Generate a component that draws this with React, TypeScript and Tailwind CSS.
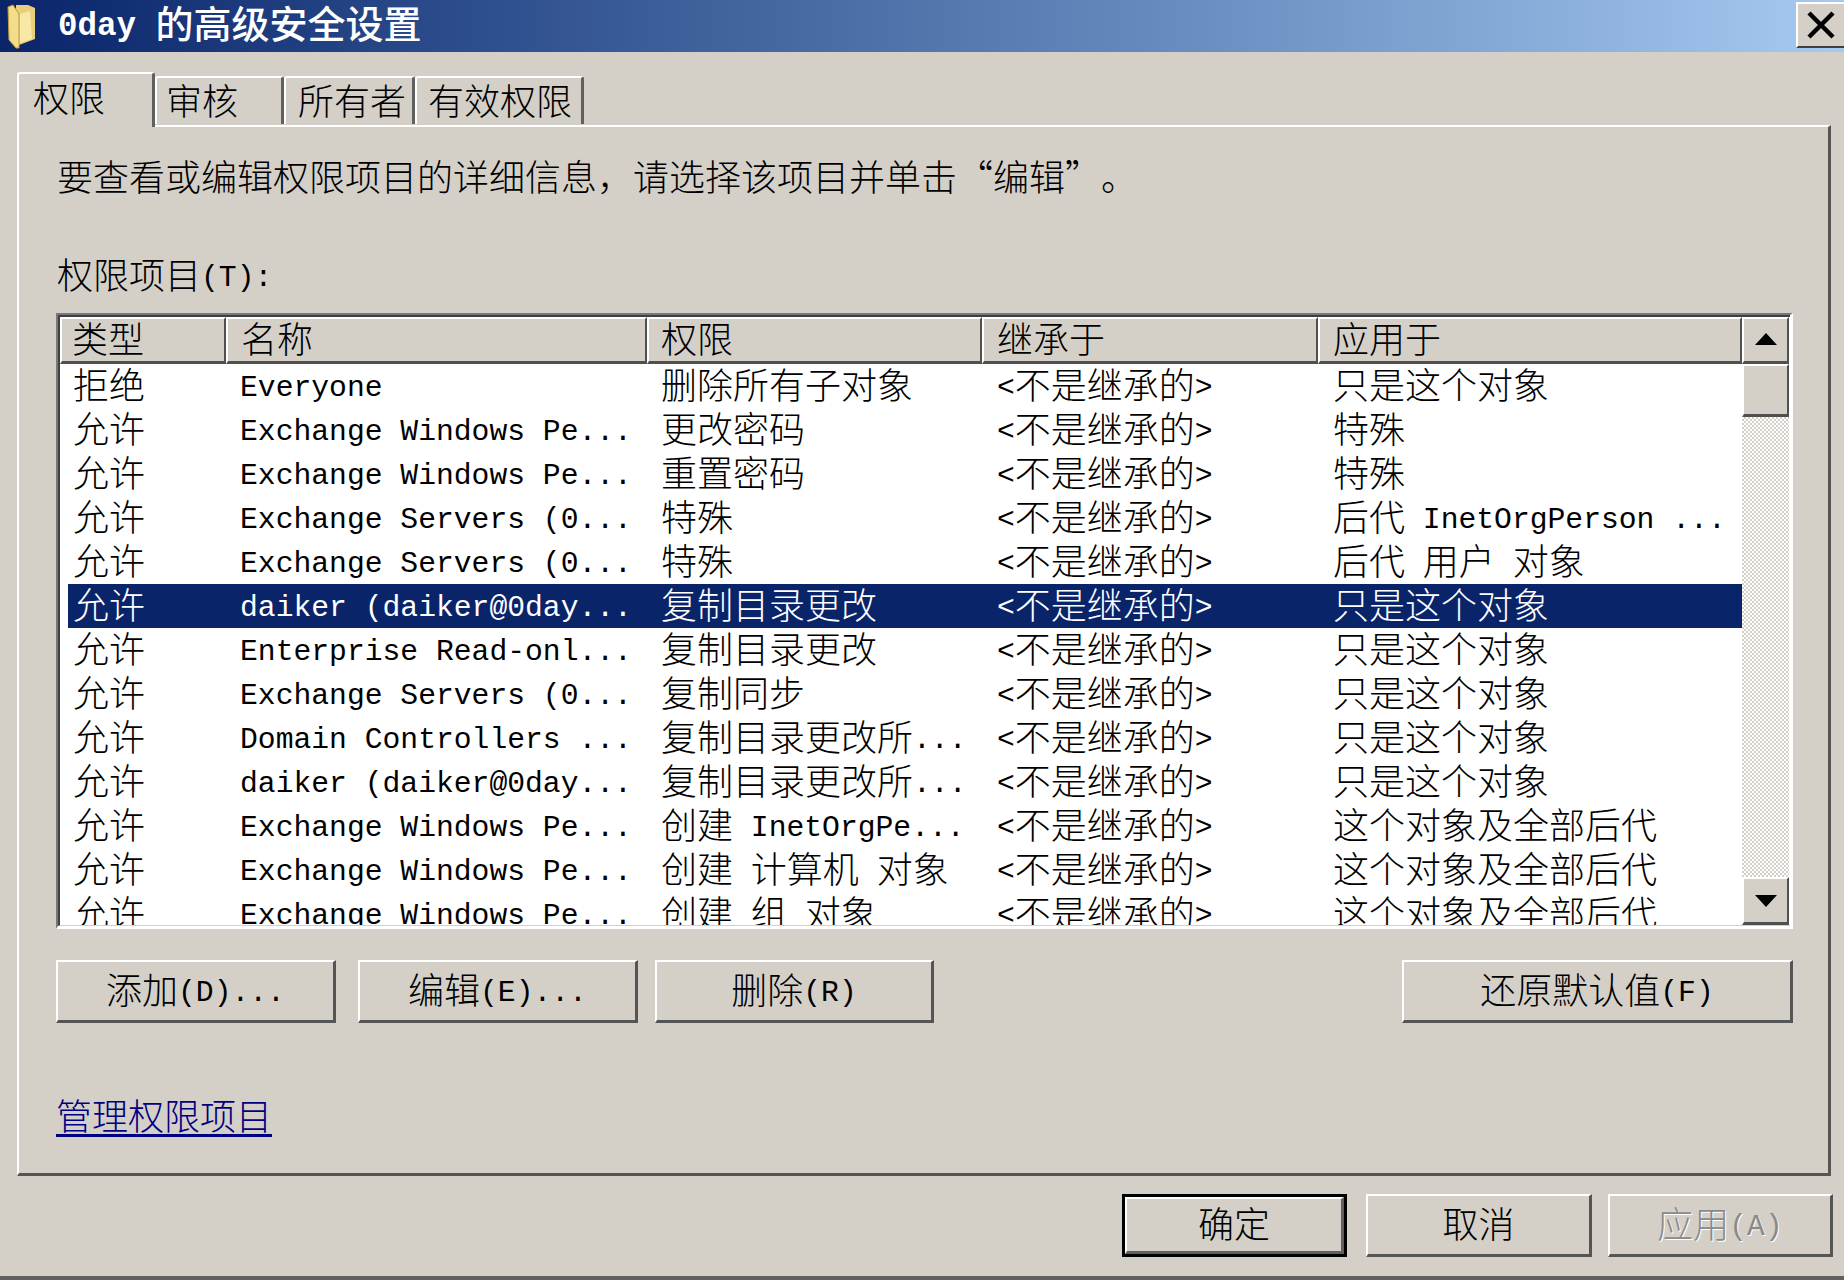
const rows = [
  ['拒绝', 'Everyone', '删除所有子对象', '只是这个对象'],
  ['允许', 'Exchange Windows Pe...', '更改密码', '特殊'],
  ['允许', 'Exchange Windows Pe...', '重置密码', '特殊'],
  ['允许', 'Exchange Servers (0...', '特殊', '后代 InetOrgPerson ...'],
  ['允许', 'Exchange Servers (0...', '特殊', '后代 用户 对象'],
  ['允许', 'daiker (daiker@0day...', '复制目录更改', '只是这个对象'],
  ['允许', 'Enterprise Read-onl...', '复制目录更改', '只是这个对象'],
  ['允许', 'Exchange Servers (0...', '复制同步', '只是这个对象'],
  ['允许', 'Domain Controllers ...', '复制目录更改所...', '只是这个对象'],
  ['允许', 'daiker (daiker@0day...', '复制目录更改所...', '只是这个对象'],
  ['允许', 'Exchange Windows Pe...', '创建 InetOrgPe...', '这个对象及全部后代'],
  ['允许', 'Exchange Windows Pe...', '创建 计算机 对象', '这个对象及全部后代'],
  ['允许', 'Exchange Windows Pe...', '创建 组 对象', '这个对象及全部后代'],
];

const headers = [
  { label: '类型', w: 'w-[166px] pl-[10px]' },
  { label: '名称', w: 'w-[421px] pl-[13px]' },
  { label: '权限', w: 'w-[335px] pl-[12px]' },
  { label: '继承于', w: 'w-[336px] pl-[13px]' },
  { label: '应用于', w: 'w-[424px] pl-[13px]' },
];

// ascii runs are half width in the original font, so they get their own size
function T({ text, title }: { text: string; title?: boolean }) {
  return (
    <span className="whitespace-pre">
      {text.split(/([\x00-\x7f]+)/).map((p, i) =>
        i % 2 === 1 ? (
          <span
            key={i}
            className={
              title
                ? "font-['Liberation_Mono'] font-bold text-[32.5px] leading-none align-[3px]"
                : "font-['Liberation_Mono'] text-[29.7px] leading-none align-[3.5px]"
            }
          >
            {p}
          </span>
        ) : (
          <span key={i}>{p}</span>
        ),
      )}
    </span>
  );
}

function Btn({ text, w, def, disabled, cls }: { text: string; w: string; def?: boolean; disabled?: boolean; cls?: string }) {
  if (def) {
    return (
      <div className={`${w} h-[63px] border-[3px] border-black ${cls ?? ''}`}>
        <div className="h-full flex items-center justify-center pb-[7px] border-t-2 border-l-2 border-white border-r-[3px] border-b-[3px] border-r-[#606060] border-b-[#606060]">
          <T text={text} />
        </div>
      </div>
    );
  }
  return (
    <div
      className={`${w} h-[63px] flex items-center justify-center pb-[7px] ${cls ?? ''} border-t-2 border-l-2 border-white border-r-[3px] border-b-[3px] border-r-[#555555] border-b-[#555555] ${
        disabled ? 'text-[#8a8a8a] [text-shadow:1px_1px_0_#ffffff]' : ''
      }`}
    >
      <T text={text} />
    </div>
  );
}

function Tab({ text, w, active, pl }: { text: string; w: string; active?: boolean; pl: string }) {
  return (
    <div
      className={`${w} ${pl} flex items-center rounded-t-[3px] border-t-2 border-l-2 border-white border-r-[3px] border-r-[#606060] bg-[#d4d0c8] ${
        active ? 'relative z-10 h-[55px] -mb-[2px]' : 'h-[48px] mb-[1px]'
      }`}
    >
      <T text={text} />
    </div>
  );
}

function Arrow({ up }: { up?: boolean }) {
  return (
    <svg width="22" height="12" viewBox="0 0 22 12">
      <path d={up ? 'M11 0 L22 12 L0 12 Z' : 'M0 0 L22 0 L11 12 Z'} fill="#000" />
    </svg>
  );
}

export default function App() {
  return (
    <div className="w-[1844px] h-[1280px] overflow-hidden flex flex-col bg-[#d4d0c8] text-black text-[36px] leading-[44px] font-light font-['Noto_Sans_CJK_SC',sans-serif] border-b-[4px] border-[#606060]">
      {/* title bar */}
      <div className="h-[52px] shrink-0 flex items-center bg-gradient-to-r from-[#0a246a] to-[#a6caf0] text-white">
        <svg className="ml-[4px] shrink-0" width="32" height="48" viewBox="0 0 32 48">
          <path d="M12 3 L24 3 L31 6 L31 37 L15 43 L12 20 Z" fill="#e9cf7c" />
          <path d="M16 12 L26 9 L28 37 L16 41 Z" fill="#f7e8a6" />
          <path d="M4 5 L9 3 L15 12 L15 46 L12 46 L5 38 Z" fill="#f3dd8a" stroke="#c09a3e" strokeWidth="1" />
        </svg>
        <div className="ml-[22px] self-start text-[38px] font-medium leading-[44px]">
          <T title text="0day 的高级安全设置" />
        </div>
        <div className="ml-auto self-start mt-[2px] w-[48px] h-[46px] flex items-center justify-center bg-[#d4d0c8] border-t-2 border-l-2 border-white border-b-2 border-b-[#404040]">
          <svg width="28" height="28" viewBox="0 0 28 28">
            <path d="M2 2 L26 26 M26 2 L2 26" stroke="#000" strokeWidth="4.5" />
          </svg>
        </div>
      </div>

      {/* tabs */}
      <div className="mt-[20px] ml-[17px] h-[53px] flex items-end shrink-0">
        <Tab active text="权限" w="w-[138px]" pl="pl-[14px] pb-[10px]" />
        <Tab text="审核" w="w-[129px]" pl="pl-[9px] pb-[5px]" />
        <Tab text="所有者" w="w-[131px]" pl="pl-[12px] pb-[5px]" />
        <Tab text="有效权限" w="w-[169px]" pl="pl-[11px] pb-[5px]" />
      </div>

      {/* panel */}
      <div className="ml-[17px] w-[1814px] h-[1051px] shrink-0 border-t-2 border-l-2 border-white border-r-[3px] border-b-[3px] border-r-[#555555] border-b-[#555555] pl-[38px]">
        <div className="mt-[26px] h-[44px]">
          要查看或编辑权限项目的详细信息，请选择该项目并单击
          <span className="inline-block w-[36px] text-right">“</span>编辑
          <span className="inline-block w-[36px] text-left">”</span>。
        </div>
        <div className="mt-[54px] h-[44px]">
          <T text="权限项目(T):" />
        </div>

        {/* list */}
        <div className="mt-[18px] -ml-px w-[1737px] h-[616px] border-t-2 border-l-2 border-[#787878] border-r-[3px] border-b-[3px] border-r-white border-b-white">
          <div className="h-full flex border-t-2 border-l-2 border-[#404040] border-r-0 border-b-[1px] border-b-[#d4d0c8] bg-white">
            <div className="w-[1682px] shrink-0 overflow-hidden">
              <div className="flex h-[47px] bg-[#d4d0c8]">
                {headers.map((h) => (
                  <div
                    key={h.label}
                    className={`${h.w} shrink-0 flex items-center pb-[7px] border-t-2 border-l-2 border-white border-r-2 border-b-[3px] border-r-[#505050] border-b-[#505050]`}
                  >
                    <T text={h.label} />
                  </div>
                ))}
              </div>
              {rows.map((r, i) => (
                <div
                  key={i}
                  className={`ml-[8px] flex h-[44px] items-center pb-[7px] ${i === 5 ? 'bg-[#0a246a] text-white' : ''}`}
                >
                  <div className="w-[158px] pl-[5px] shrink-0"><T text={r[0]} /></div>
                  <div className="w-[421px] pl-[14px] shrink-0"><T text={r[1]} /></div>
                  <div className="w-[335px] pl-[14px] shrink-0"><T text={r[2]} /></div>
                  <div className="w-[336px] pl-[15px] shrink-0"><T text="<不是继承的>" /></div>
                  <div className="pl-[15px]"><T text={r[3]} /></div>
                </div>
              ))}
            </div>
            {/* scrollbar */}
            <div className="w-[47px] shrink-0 flex flex-col">
              <div className="h-[47px] flex items-center justify-center pb-[2px] bg-[#d4d0c8] border-t-2 border-l-2 border-white border-r-2 border-b-[3px] border-r-[#505050] border-b-[#505050]">
                <Arrow up />
              </div>
              <div className="h-[53px] bg-[#d4d0c8] border-t-2 border-l-2 border-white border-r-2 border-b-[3px] border-r-[#505050] border-b-[#505050]" />
              <div className="flex-1 bg-[repeating-conic-gradient(#d4d0c8_0_25%,#ffffff_0_50%)] bg-[length:4px_4px]" />
              <div className="h-[48px] flex items-center justify-center bg-[#d4d0c8] border-t-2 border-l-2 border-white border-r-2 border-b-[3px] border-r-[#505050] border-b-[#505050]">
                <Arrow />
              </div>
            </div>
          </div>
        </div>

        {/* list buttons */}
        <div className="mt-[31px] flex -ml-px w-[1737px]">
          <Btn text="添加(D)..." w="w-[280px]" />
          <Btn text="编辑(E)..." w="w-[280px]" cls="ml-[22px]" />
          <Btn text="删除(R)" w="w-[279px]" cls="ml-[17px]" />
          <Btn text="还原默认值(F)" w="w-[391px]" cls="ml-auto" />
        </div>

        <div className="mt-[69px]">
          <span className="text-[#000080] underline underline-offset-[4px] -ml-px">管理权限项目</span>
        </div>
      </div>

      {/* dialog buttons */}
      <div className="mt-[18px] flex justify-end pr-[11px]">
        <Btn def text="确定" w="w-[225px]" />
        <Btn text="取消" w="w-[226px]" cls="ml-[19px]" />
        <Btn disabled text="应用(A)" w="w-[225px]" cls="ml-[16px]" />
      </div>
    </div>
  );
}
